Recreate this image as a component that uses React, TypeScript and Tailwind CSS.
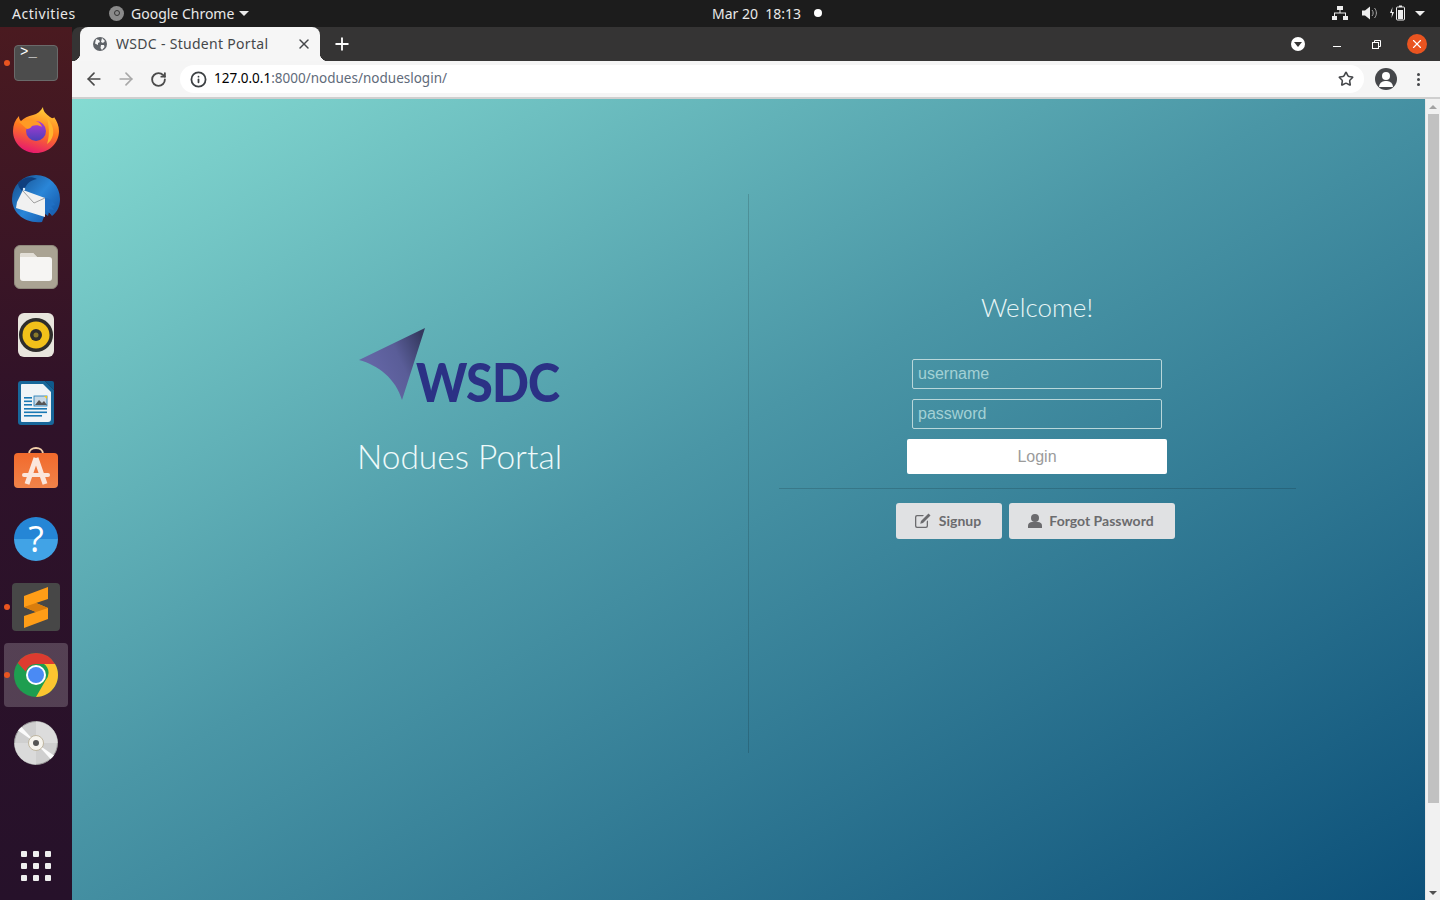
import React from 'react';
import { ArrowLeft, ArrowRight, RotateCw, Info, Star, Plus, X } from 'lucide-react';

const UI_FONT = "font-['Noto_Sans',sans-serif]";

function DockSlot({ active, running, children }: { active?: boolean; running?: boolean; children: React.ReactNode }) {
  return (
    <div className="relative flex h-[68px] w-[72px] items-center justify-center">
      {active && <div className="absolute left-[4px] top-[2px] h-[64px] w-[64px] rounded-[4px] bg-white/20" />}
      {running && <div className="absolute left-[4px] top-[31px] h-[6px] w-[6px] rounded-full bg-[#e95420]" />}
      <div className="relative flex h-[48px] w-[48px] items-center justify-center">{children}</div>
    </div>
  );
}

function Firefox() {
  return (
    <svg width="46" height="48" viewBox="0 0 46 48">
      <defs>
        <linearGradient id="ff1" x1="0.7" y1="0" x2="0.4" y2="1">
          <stop offset="0" stopColor="#ffd43a" />
          <stop offset="0.5" stopColor="#ff7a1f" />
          <stop offset="1" stopColor="#e6186f" />
        </linearGradient>
        <linearGradient id="ff2" x1="0.5" y1="0" x2="0.5" y2="1">
          <stop offset="0" stopColor="#b13bd6" />
          <stop offset="1" stopColor="#4b3fb8" />
        </linearGradient>
      </defs>
      <path d="M30 0c0 4 3 7 7 10 3 2 4 1 4 0 3 4 5 9 5 14 0 12-10 22-23 22C10 46 0 36 0 24 0 18 2 13 6 9c0 3 1 4 2 5 3-3 7-5 12-6 4-1 8-4 10-8z" fill="url(#ff1)" />
      <circle cx="23" cy="24" r="10" fill="url(#ff2)" />
      <path d="M6 15c5-2 12-3 17-1 3 1 5 3 6 6-3-2-7-2-10-1-1 2-3 3-5 3-3-2-5-5-8-7z" fill="#ff9a24" />
      <path d="M34 11c5 5 7 11 6 17-1 4-3 7-6 9 2-6 3-14 0-26z" fill="#ffb52e" />
    </svg>
  );
}

function Thunderbird() {
  return (
    <svg width="48" height="48" viewBox="0 0 48 48">
      <defs>
        <linearGradient id="tb1" x1="0.1" y1="0" x2="0.9" y2="0.7">
          <stop offset="0" stopColor="#16508f" />
          <stop offset="0.6" stopColor="#2a86d8" />
          <stop offset="1" stopColor="#1a63b5" />
        </linearGradient>
      </defs>
      <path d="M24 0a24 24 0 0 1 24 24c0 8-3 13-8 17l-3-4-1 4-3-2-3 8C12 49 0 37 0 24A24 24 0 0 1 24 0z" fill="url(#tb1)" />
      <path d="M6 8c5-6 13-7 19-4-6 1-10 4-12 9l-3 3C8 14 6 11 6 8z" fill="#0f3f7e" />
      <path d="M5 27L11 15l22 8v19L4 33z" fill="#f1f1f1" />
      <path d="M11 16l11 12 11-5" fill="none" stroke="#9f9f9f" strokeWidth="1" />
      <circle cx="12" cy="14" r="1.200" fill="#dcecf8" />
      <path d="M33 23c4 0 8 3 10 7l-4 1 3 4-5-1 2 5-6-4z" fill="#1f6fc4" />
    </svg>
  );
}

function FilesIcon() {
  return (
    <div className="flex h-[44px] w-[44px] items-center justify-center rounded-[6px] border border-[#8f897c] bg-[#aaa393]">
      <svg width="32" height="28" viewBox="0 0 32 28">
        <path d="M2 0h11l4 4h12a3 3 0 0 1 3 3v18a3 3 0 0 1-3 3H3a3 3 0 0 1-3-3V2a2 2 0 0 1 2-2z" fill="#f6f5f3" />
        <path d="M0 2a2 2 0 0 1 2-2h11l4 4H0z" fill="#e2ded6" />
      </svg>
    </div>
  );
}

function Rhythmbox() {
  return (
    <div className="flex h-[44px] w-[36px] items-center justify-center rounded-[6px] bg-[#e8e5dd]">
      <svg width="34" height="34" viewBox="0 0 34 34">
        <circle cx="17" cy="17" r="17" fill="#2e2d2b" />
        <circle cx="17" cy="17" r="13.5" fill="#f2c11a" />
        <circle cx="17" cy="17" r="6" fill="#2e2d2b" />
        <circle cx="17" cy="17" r="2.5" fill="#8a7a2a" />
      </svg>
    </div>
  );
}

function WriterIcon() {
  return (
    <svg width="36" height="44" viewBox="0 0 36 44">
      <path d="M3 0h24l9 9v32a3 3 0 0 1-3 3H3a3 3 0 0 1-3-3V3a3 3 0 0 1 3-3z" fill="#18679a" />
      <path d="M4 3h21l8 8v27a3 3 0 0 1-3 3H4a1 1 0 0 1-1-1V4a1 1 0 0 1 1-1z" fill="#f0f4f7" />
      <path d="M27 0h7a2 2 0 0 1 2 2v7z" fill="#0f5a8c" />
      <rect x="6" y="16" width="8" height="1.6" fill="#1878b4" />
      <rect x="6" y="19.5" width="8" height="1.6" fill="#1878b4" />
      <rect x="6" y="23" width="8" height="1.6" fill="#1878b4" />
      <rect x="6" y="27" width="23" height="1.6" fill="#1878b4" />
      <rect x="6" y="30.5" width="23" height="1.6" fill="#1878b4" />
      <rect x="6" y="34" width="18" height="1.6" fill="#1878b4" />
      <rect x="16" y="15" width="13" height="10" fill="#c8d8e4" stroke="#1878b4" strokeWidth="0.8" />
      <path d="M17 24l4-5 3 3 2-2 3 4z" fill="#555" />
      <path d="M26 15h3v3z" fill="#f5c518" />
    </svg>
  );
}

function SoftwareIcon() {
  return (
    <svg width="44" height="42" viewBox="0 0 44 42" className="mb-[6px]">
      <defs>
        <linearGradient id="sw1" x1="0" y1="0" x2="0" y2="1">
          <stop offset="0" stopColor="#f26a2c" />
          <stop offset="1" stopColor="#f0834a" />
        </linearGradient>
      </defs>
      <path d="M15 7c0-8 14-8 14 0" fill="none" stroke="#f2cfa8" strokeWidth="2" />
      <rect x="0" y="6" width="44" height="35" rx="4" fill="url(#sw1)" />
      <path d="M22 11L13 37M22 11l9 26" stroke="#fbe6dc" strokeWidth="5" fill="none" />
      <rect x="8" y="26" width="28" height="4" rx="2" fill="#fbe6dc" />
    </svg>
  );
}

function HelpIcon() {
  return (
    <div className="flex h-[44px] w-[44px] items-center justify-center rounded-full bg-[linear-gradient(#2586d6_50%,#41a3e6_50%)]">
      <span className="font-['Open_Sans',sans-serif] text-[36px] leading-[44px] text-white">?</span>
    </div>
  );
}

function SublimeIcon() {
  return (
    <div className="flex h-[48px] w-[48px] items-center justify-center rounded-[4px] bg-[#474747]">
      <svg width="24" height="41" viewBox="0 0 24 41">
        <path d="M0 9L24 0v12l-12 4 12 5v11L0 41V29l12-4-12-5z" fill="#ff9d17" />
        <path d="M0 20l12-4 12 5-12 4z" fill="#d97d0d" />
      </svg>
    </div>
  );
}

function ChromeLogo({ size = 44 }: { size?: number }) {
  return (
    <svg width={size} height={size} viewBox="0 0 44 44">
      <circle cx="22" cy="22" r="22" fill="#1e9e50" />
      <path d="M22 0a22 22 0 0 1 19.05 11H22a11 11 0 0 0-10.4 7.4L3.7 9.9A22 22 0 0 1 22 0z" fill="#dd3b30" />
      <path d="M41.05 11A22 22 0 0 1 22 44l9.5-16.5A11 11 0 0 0 30 11z" fill="#fcc530" />
      <circle cx="22" cy="22" r="10" fill="#fff" />
      <circle cx="22" cy="22" r="8" fill="#4a8af4" />
    </svg>
  );
}

function DiscIcon() {
  return (
    <svg width="44" height="44" viewBox="0 0 44 44">
      <circle cx="22" cy="22" r="21.5" fill="#cfcfcf" stroke="#9a9a9a" strokeWidth="1" />
      <path d="M22 0.500a21.500 21.500 0 0 1 21.500 21.500H22z" fill="#dcdcdc" />
      <path d="M22 43.500A21.500 21.500 0 0 1 0.500 22H22z" fill="#dadada" />
      <path d="M22 22L4 9.500A22 22 0 0 1 7.500 6z" fill="#fbfbfb" />
      <path d="M22 22l18 12.500a22 22 0 0 1-3.500 3.500z" fill="#fbfbfb" />
      <circle cx="22" cy="22" r="7.500" fill="#f6f4ee" stroke="#b5a98f" strokeWidth="0.8" />
      <circle cx="22" cy="22" r="3" fill="#555" />
    </svg>
  );
}

function GridIcon() {
  return (
    <div className="grid grid-cols-3 gap-x-[6px] gap-y-[6px]">
      {Array.from({ length: 9 }).map((_, i) => (
        <div key={i} className="h-[6px] w-[6px] rounded-[1px] bg-[#eeeeee]" />
      ))}
    </div>
  );
}

function Dock() {
  return (
    <aside className="flex w-[72px] shrink-0 flex-col bg-[linear-gradient(#4a1a20,#2f1229_45%,#26112a)] pt-[2px]">
      <DockSlot running>
        <div className="h-[36px] w-[44px] rounded-[4px] border border-[#6a6a6a] bg-[#4c4c4c] px-[5px] font-['Liberation_Mono',monospace] text-[14px] leading-[12px] text-white">
          &gt;_
        </div>
      </DockSlot>
      <DockSlot><Firefox /></DockSlot>
      <DockSlot><Thunderbird /></DockSlot>
      <DockSlot><FilesIcon /></DockSlot>
      <DockSlot><Rhythmbox /></DockSlot>
      <DockSlot><WriterIcon /></DockSlot>
      <DockSlot><SoftwareIcon /></DockSlot>
      <DockSlot><HelpIcon /></DockSlot>
      <DockSlot running><SublimeIcon /></DockSlot>
      <DockSlot active running><ChromeLogo /></DockSlot>
      <DockSlot><DiscIcon /></DockSlot>
      <div className="mt-auto flex h-[68px] items-center justify-center">
        <GridIcon />
      </div>
    </aside>
  );
}

function TopBar() {
  return (
    <header className={`flex h-[27px] shrink-0 items-center bg-[#1c1c1c] pb-[1px] text-[14px] text-[#e9e9e9] ${UI_FONT}`}>
      <span className="ml-[12px] w-[97px] tracking-[0.55px]">Activities</span>
      <span className="flex w-[603px] items-center">
        <span className="mr-[7px] flex h-[15px] w-[15px] items-center justify-center rounded-full bg-[#8a8a8a]">
          <span className="h-[6px] w-[6px] rounded-full border border-[#333]" />
        </span>
        Google Chrome
        <span className="ml-[5px] h-0 w-0 border-x-[5px] border-t-[5px] border-x-transparent border-t-[#e9e9e9]" />
      </span>
      <span className="whitespace-pre">Mar 20  18:13</span>
      <span className="ml-[13px] h-[8px] w-[8px] rounded-full bg-white" />
      <div className="ml-auto mr-[15px] flex items-center">
        <svg width="16" height="14" viewBox="0 0 16 14" fill="#eee" className="mr-[14px]">
          <rect x="5" y="0" width="6" height="4" />
          <rect x="0" y="10" width="5" height="4" />
          <rect x="11" y="10" width="5" height="4" />
          <path d="M7.5 4h1v2.500H14V10h-1V7.500H3V10H2V6.500h5.500z" />
        </svg>
        <svg width="16" height="14" viewBox="0 0 16 14" className="mr-[12px]">
          <path d="M0 4.500h3L8 0.500v13L3 9.500H0z" fill="#eee" />
          <path d="M10 4c1.500 1.500 1.500 4.500 0 6M12.500 2c2.500 3 2.500 7 0 10" fill="none" stroke="#aaa" strokeWidth="1" />
        </svg>
        <svg width="15" height="16" viewBox="0 0 15 16" className="mr-[10px]">
          <path d="M2.500 2L0 8h2l-.5 5L4 7H2z" fill="#eee" />
          <rect x="6.500" y="2" width="8" height="13" rx="1" fill="none" stroke="#eee" />
          <rect x="8" y="5" width="5" height="9" fill="#eee" />
          <rect x="9" y="0.500" width="3" height="1.500" fill="#eee" />
        </svg>
        <span className="h-0 w-0 border-x-[5px] border-t-[5px] border-x-transparent border-t-[#eee]" />
      </div>
    </header>
  );
}

function BrowserChrome() {
  return (
    <div className={`shrink-0 ${UI_FONT}`}>
      <div className="flex h-[34px] items-end rounded-tl-[8px] bg-[#353434]">
        <div className="relative ml-[8px] flex h-[34px] w-[240px] items-center rounded-t-[8px] bg-[#f6f6f6] pl-[13px] pr-[8px]">
          <div className="absolute bottom-0 left-[-8px] h-[8px] w-[8px] bg-[radial-gradient(circle_at_0_0,transparent_8px,#f6f6f6_8.5px)]" />
          <div className="absolute bottom-0 right-[-8px] h-[8px] w-[8px] bg-[radial-gradient(circle_at_100%_0,transparent_8px,#f6f6f6_8.5px)]" />
          <svg width="14" height="14" viewBox="0 0 14 14" className="mr-[9px] shrink-0">
            <circle cx="7" cy="7" r="7" fill="#5f6368" />
            <path d="M3 2l3 1 1 2-2 1v2L2 6.500zM9 1l3 3-2 2-2-1zM8 8l3 0 .500 2L9 13 7.500 11z" fill="#f6f6f6" />
          </svg>
          <span className="pb-[2px] text-[14px] tracking-[0.3px] whitespace-pre text-[#45474a]">WSDC - Student Portal</span>
          <X className="ml-auto h-[16px] w-[16px] text-[#45474a]" strokeWidth={2.2} />
        </div>
        <Plus className="ml-[12px] mb-[7px] h-[20px] w-[20px] text-white" strokeWidth={2.2} />
        <div className="ml-auto mr-[13px] flex h-[34px] items-center text-white">
          <div className="flex h-[14px] w-[14px] items-center justify-center rounded-full bg-white">
            <span className="h-0 w-0 border-x-[4px] border-t-[5px] border-x-transparent border-t-[#353434]" />
          </div>
          <div className="ml-[28px] mt-[4px] h-px w-[8px] bg-white" />
          <svg width="9" height="9" viewBox="0 0 9 9" fill="none" stroke="white" className="ml-[31px]">
            <rect x="0.500" y="2.500" width="6" height="6" />
            <path d="M2.500 2.500v-2h6v6h-2" />
          </svg>
          <div className="ml-[26px] flex h-[20px] w-[20px] items-center justify-center rounded-full bg-[#e95420]">
            <X className="h-[14px] w-[14px]" strokeWidth={2} />
          </div>
        </div>
      </div>
      <div className="flex h-[36px] items-center bg-[#f5f5f5] pl-[12px] pr-[20px]">
        <ArrowLeft className="h-[20px] w-[20px] text-[#4a4a4a]" strokeWidth={2} />
        <ArrowRight className="ml-[12px] h-[20px] w-[20px] text-[#a8a8a8]" strokeWidth={2} />
        <RotateCw className="ml-[14px] h-[17px] w-[17px] text-[#4a4a4a]" strokeWidth={2.6} />
        <div className="ml-[13px] flex h-[28px] min-w-0 flex-1 items-center rounded-full bg-white pl-[10px] pr-[10px] text-[13.5px]">
          <Info className="h-[17px] w-[17px] text-[#3c4043]" strokeWidth={2.5} />
          <span className="ml-[7px] pb-[1px] text-black">127.0.0.1</span>
          <span className="pb-[1px] text-[#5f6b7a]">:8000/nodues/nodueslogin/</span>
          <Star className="ml-auto h-[16px] w-[16px] text-[#45474a]" strokeWidth={2.4} />
        </div>
        <div className="relative ml-[11px] h-[22px] w-[22px] overflow-hidden rounded-full bg-[#45474a]">
          <div className="absolute left-[7px] top-[4px] h-[8px] w-[8px] rounded-full bg-white" />
          <div className="absolute left-[4px] top-[13px] h-[6px] w-[14px] rounded-t-full bg-white" />
        </div>
        <div className="ml-[20px] flex flex-col gap-[2px]">
          <span className="h-[3px] w-[3px] rounded-full bg-[#45474a]" />
          <span className="h-[3px] w-[3px] rounded-full bg-[#45474a]" />
          <span className="h-[3px] w-[3px] rounded-full bg-[#45474a]" />
        </div>
      </div>
      <div className="h-[2px] bg-[#cfcfcf]" />
    </div>
  );
}

function Logo() {
  return (
    <div className="relative h-[76px] w-[204px]">
      <svg width="70" height="74" viewBox="0 0 70 74" className="absolute left-0 top-[1px]">
        <defs>
          <linearGradient id="wing" x1="0.2" y1="0.6" x2="1" y2="0.2">
            <stop offset="0" stopColor="#6466a6" />
            <stop offset="0.5" stopColor="#5a5d98" />
            <stop offset="1" stopColor="#34395f" />
          </linearGradient>
        </defs>
        <path d="M67 1L1 33C20 38 38 52 44 73z" fill="url(#wing)" />
      </svg>
      <span className="absolute left-[58px] top-[24px] origin-left scale-x-[0.9] font-['Lato',sans-serif] text-[54px] font-black leading-[64px] tracking-[-1px] text-[#2b3185]">
        WSDC
      </span>
    </div>
  );
}

function Scrollbar() {
  return (
    <div className="flex w-[15px] shrink-0 flex-col items-center border-l border-[#e7e7e7] bg-[#f1f1f1]">
      <div className="flex h-[15px] w-full items-center justify-center">
        <span className="h-0 w-0 border-x-[4px] border-b-[4px] border-x-transparent border-b-[#a3a3a3]" />
      </div>
      <div className="h-[689px] w-[11px] bg-[#c1c1c1]" />
      <div className="mt-auto flex h-[15px] w-full items-center justify-center">
        <span className="h-0 w-0 border-x-[4px] border-t-[4px] border-x-transparent border-t-[#505050]" />
      </div>
    </div>
  );
}

function LoginPanel() {
  return (
    <section className="flex w-[577px] flex-col items-center px-[30px] pt-[96px]">
      <h2 className="font-['Lato',sans-serif] text-[26px] leading-[34px] font-light text-[#e8f6f6]">Welcome!</h2>
      <input
        placeholder="username"
        className="mt-[35px] h-[30px] w-[250px] rounded-[2px] border border-[#b9d7da] bg-transparent px-[5px] font-['Liberation_Sans',sans-serif] text-[16px] outline-none placeholder:text-[#a3d1d5]"
      />
      <input
        placeholder="password"
        className="mt-[10px] h-[30px] w-[250px] rounded-[2px] border border-[#b9d7da] bg-transparent px-[5px] font-['Liberation_Sans',sans-serif] text-[16px] outline-none placeholder:text-[#a3d1d5]"
      />
      <button className="mt-[10px] h-[35px] w-[260px] rounded-[2px] bg-white font-['Liberation_Sans',sans-serif] text-[16px] text-[#9b9b9b]">
        Login
      </button>
      <div className="mt-[14px] h-px w-full bg-black/15" />
      <div className="mt-[14px] flex gap-[7px] pr-[3px] font-['Lato',sans-serif] text-[14px] font-bold text-[#6b6b6e]">
        <button className="flex h-[36px] w-[106px] items-center justify-center rounded-[3px] bg-[#e0e1e3] pb-[1px] pr-[2px]">
          <svg width="16" height="15" viewBox="0 0 16 15" fill="#6b6b6e" className="mr-[8px]">
            <path d="M2 2h7L7.800 3.300H2.300a1 1 0 0 0-1 1v8.400a1 1 0 0 0 1 1h8.400a1 1 0 0 0 1-1V8.500l1.300-1.300v5.800a2 2 0 0 1-2 2H2a2 2 0 0 1-2-2V4a2 2 0 0 1 2-2z" />
            <path d="M13.500 0.500l2 2L8 10l-2.800.8.800-2.800z" />
          </svg>
          Signup
        </button>
        <button className="flex h-[36px] w-[166px] items-center justify-center rounded-[3px] bg-[#e0e1e3] pb-[1px] pr-[2px]">
          <svg width="14" height="14" viewBox="0 0 14 14" fill="#6b6b6e" className="mr-[7px]">
            <circle cx="7" cy="4" r="4" />
            <path d="M0 14v-2.500C0 9.500 2 8 4 8h6c2 0 4 1.500 4 3.500V14z" />
          </svg>
          Forgot Password
        </button>
      </div>
    </section>
  );
}

export default function App() {
  return (
    <div className="flex h-[900px] w-[1440px] flex-col overflow-hidden bg-[#1c1c1c]">
      <TopBar />
      <div className="flex min-h-0 flex-1">
        <Dock />
        <div className="flex min-w-0 flex-1 flex-col">
          <BrowserChrome />
          <div className="flex min-h-0 flex-1">
            <main className="flex min-w-0 flex-1 justify-center bg-[linear-gradient(150deg,#85dbd2,#4a96a6_45%,#0c5079)] pt-[95px]">
              <div className="flex h-[559px] w-[1154px]">
                <section className="flex w-[577px] flex-col items-center border-r border-black/15 pt-[132px]">
                  <Logo />
                  <h1 className="mt-[29px] font-['Lato',sans-serif] text-[33.5px] leading-[50px] font-light text-[#eefafa]">Nodues Portal</h1>
                </section>
                <LoginPanel />
              </div>
            </main>
            <Scrollbar />
          </div>
        </div>
      </div>
    </div>
  );
}
